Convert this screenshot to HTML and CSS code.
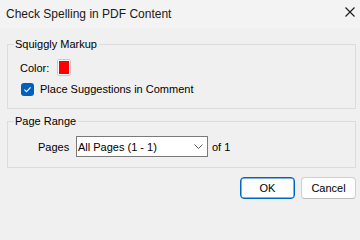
FILE: index.html
```html
<!DOCTYPE html>
<html>
<head>
<meta charset="utf-8">
<link rel="stylesheet" href="styles.css">
</head>
<body>
<div class="dialog">
  <div class="titlebar">
    <span class="title">Check Spelling in PDF Content</span>
    <span class="close">
      <svg width="10" height="10" viewBox="0 0 10 10"><path d="M0.5 0.5 L9.5 9.5 M9.5 0.5 L0.5 9.5" stroke="#1a1a1a" stroke-width="1.1" fill="none"/></svg>
    </span>
  </div>
  <div class="content">
    <fieldset class="group group-markup">
      <legend class="legend">Squiggly Markup</legend>
      <div class="group-body markup-body">
        <div class="row color-row">
          <span class="color-label">Color:</span>
          <span class="swatch"><span class="swatch-fill"></span></span>
        </div>
        <div class="row check-row">
          <span class="checkbox">
            <svg width="13" height="13" viewBox="0 0 13 13"><path d="M3.4 6.7 L5.5 8.7 L9.6 4.4" stroke="#fff" stroke-width="1.1" fill="none"/></svg>
          </span>
          <span class="check-label">Place Suggestions in Comment</span>
        </div>
      </div>
    </fieldset>
    <fieldset class="group group-range">
      <legend class="legend">Page Range</legend>
      <div class="group-body range-body">
        <span class="pages-label">Pages</span>
        <span class="select">
          <span class="select-text">All Pages (1 - 1)</span>
          <svg class="chevron" width="9" height="5" viewBox="0 0 9 5"><path d="M0.5 0.5 L4.5 4.5 L8.5 0.5" stroke="#5a5a5a" stroke-width="1" fill="none"/></svg>
        </span>
        <span class="of-label">of 1</span>
      </div>
    </fieldset>
    <div class="buttons">
      <button class="btn btn-primary">OK</button>
      <button class="btn">Cancel</button>
    </div>
  </div>
</div>
</body>
</html>
```
FILE: styles.css
```css
html, body {
  margin: 0;
  padding: 0;
}
body {
  width: 360px;
  height: 203px;
  background: #f0f0f0;
  font-family: "Liberation Sans", Arial, sans-serif;
  font-size: 11px;
  color: #000;
  overflow: hidden;
}
.dialog {
  width: 360px;
  height: 203px;
  display: flex;
  flex-direction: column;
}
.titlebar {
  height: 28px;
  background: #f3f3f3;
  display: flex;
  align-items: center;
  padding: 0 5px 0 6px;
  flex-shrink: 0;
}
.title {
  flex: 1;
  font-size: 12px;
  color: #1a1a1a;
  line-height: 14px;
  margin-top: -1px;
}
.close {
  width: 10px;
  height: 10px;
  display: flex;
  margin-top: -4px;
}
.content {
  padding: 9px 4px 0 7px;
  display: flex;
  flex-direction: column;
}
.group {
  margin: 0;
  padding: 0;
  border: 1px solid #dcdcdc;
  min-inline-size: 0;
}
.legend {
  margin-left: 6px;
  padding: 0 2px 0 1px;
  line-height: 14px;
  height: 14px;
}
.group-range {
  margin-top: 5px;
}
.markup-body {
  padding: 8px 0 12px 12px;
  display: flex;
  flex-direction: column;
  gap: 6px;
}
.row {
  display: flex;
  align-items: center;
}
.color-label {
  width: 37px;
  line-height: 14px;
}
.swatch {
  width: 14px;
  height: 17px;
  box-sizing: border-box;
  border: 1px solid #c9c9c9;
  border-radius: 2px;
  background: #fff;
  padding: 1px;
  display: flex;
}
.swatch-fill {
  flex: 1;
  background: #ff0000;
}
.check-row {
  padding-left: 1px;
  height: 14px;
}
.checkbox {
  width: 13px;
  height: 13px;
  border-radius: 3px;
  background: #005fb8;
  display: flex;
  margin-right: 6px;
}
.check-label {
  line-height: 14px;
}
.range-body {
  padding: 8px 0 10px 30px;
  display: flex;
  align-items: center;
}
.pages-label {
  width: 38px;
  line-height: 14px;
}
.select {
  width: 132px;
  height: 21px;
  box-sizing: border-box;
  border: 1px solid #7a7a7a;
  background: #fff;
  display: flex;
  align-items: center;
  padding: 0 4px 0 1px;
}
.select-text {
  flex: 1;
  line-height: 14px;
}
.of-label {
  margin-left: 4px;
  line-height: 14px;
}
.buttons {
  display: flex;
  justify-content: flex-end;
  gap: 6px;
  margin-top: 9px;
}
.btn {
  width: 55px;
  height: 22px;
  box-sizing: border-box;
  background: #fdfdfd;
  border: 1px solid #d0d0d0;
  border-bottom-color: #bdbdbd;
  border-radius: 4px;
  font-family: "Liberation Sans", Arial, sans-serif;
  font-size: 11px;
  color: #000;
  padding: 0;
  margin: 0;
}
.btn-primary {
  border: 1px solid #0067c0;
  box-shadow: inset 0 0 0 0.5px #0067c0;
}
```
